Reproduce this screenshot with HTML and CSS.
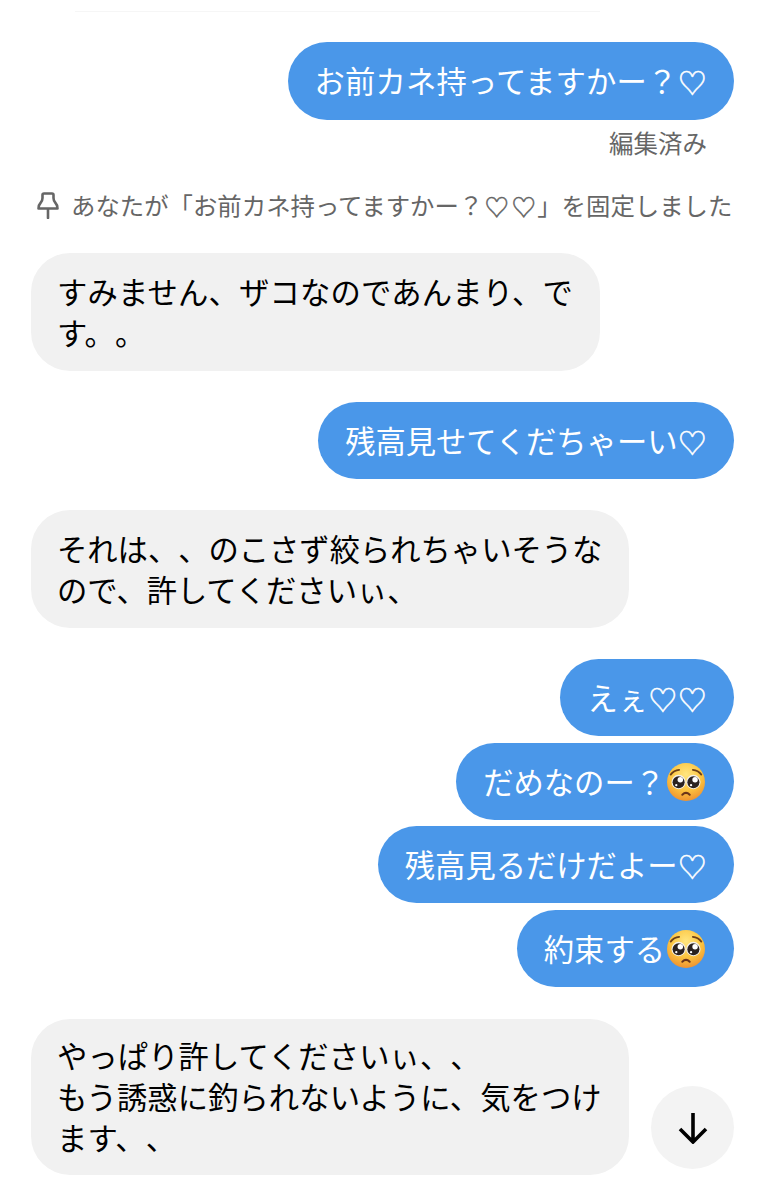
FILE: index.html
```html
<!DOCTYPE html>
<html lang="ja">
<head>
    <meta charset="UTF-8">
    <meta name="viewport" content="width=device-width, initial-scale=1.0">
    <title>Chat</title>
    <link rel="stylesheet" href="styles.css">
</head>
<body>
    <svg class="defs" width="0" height="0" aria-hidden="true">
        <defs>
            <radialGradient id="face" cx="50%" cy="30%" r="75%">
                <stop offset="0%" stop-color="#ffe680"/>
                <stop offset="55%" stop-color="#fcc43f"/>
                <stop offset="100%" stop-color="#ec8a2e"/>
            </radialGradient>
            <symbol id="plead" viewBox="0 0 36 36">
                <circle cx="18" cy="18" r="18" fill="url(#face)"/>
                <path d="M3.5 11 Q6.5 7 11.5 6.5 M32.5 11 Q29.5 7 24.5 6.5" fill="none" stroke="#6b3f18" stroke-width="1.7" stroke-linecap="round"/>
                <circle cx="11" cy="18" r="6.8" fill="#f4f0ea"/>
                <circle cx="25" cy="18" r="6.8" fill="#f4f0ea"/>
                <circle cx="11" cy="18.3" r="5.7" fill="#2b2220"/>
                <circle cx="25" cy="18.3" r="5.7" fill="#2b2220"/>
                <circle cx="12.6" cy="15.8" r="2.6" fill="#fff"/>
                <circle cx="26.6" cy="15.8" r="2.6" fill="#fff"/>
                <circle cx="8.8" cy="21" r="1.1" fill="#fff"/>
                <circle cx="22.8" cy="21" r="1.1" fill="#fff"/>
                <path d="M14.5 30 Q18 26.5 21.5 30" fill="none" stroke="#6b3418" stroke-width="1.9" stroke-linecap="round"/>
            </symbol>
        </defs>
    </svg>

    <main class="chat">
        <div class="divider"></div>

        <div class="bubble mine first">お前カネ持ってますかー？<span class="heart">♡</span></div>
        <div class="edited">編集済み</div>

        <div class="pin-note">
            <svg class="pin-icon" viewBox="0 0 22 27" width="22" height="27">
                <path d="M7 1.5 H15 Q16.5 1.5 16.5 3 V6 Q16.5 9 18.5 11 Q20.5 13 20.5 16.5 H1.5 Q1.5 13 3.5 11 Q5.5 9 5.5 6 V3 Q5.5 1.5 7 1.5 Z M11 16.5 V26" fill="none" stroke="#666" stroke-width="2.6" stroke-linejoin="round" stroke-linecap="round"/>
            </svg>
            <span>あなたが「お前カネ持ってますかー？<span class="heart">♡</span><span class="heart">♡</span>」を固定しました</span>
        </div>

        <div class="bubble theirs spaced">すみません、ザコなのであんまり、で<br>す。。</div>

        <div class="bubble mine gap-big">残高見せてくだちゃーい<span class="heart">♡</span></div>

        <div class="bubble theirs gap-big">それは、、のこさず絞られちゃいそうな<br>ので、許してくださいぃ、</div>

        <div class="bubble mine gap-big">えぇ<span class="heart">♡</span><span class="heart">♡</span></div>
        <div class="bubble mine gap-small">だめなのー？<svg class="emoji"><use href="#plead"/></svg></div>
        <div class="bubble mine gap-small">残高見るだけだよー<span class="heart">♡</span></div>
        <div class="bubble mine gap-small">約束する<svg class="emoji"><use href="#plead"/></svg></div>

        <div class="bubble theirs tall">やっぱり許してくださいぃ、、<br>もう誘惑に釣られないように、気をつけ<br>ます、、</div>

        <button class="scroll-btn" aria-label="scroll down">
            <svg viewBox="0 0 32 32" width="32" height="32">
                <path d="M16 1 V30 M3 17 L16 30 L29 17" fill="none" stroke="#000" stroke-width="3.6"/>
            </svg>
        </button>
    </main>
</body>
</html>
```

FILE: styles.css
```css
body {
    margin: 0;
    background: #fff;
    font-family: "Noto Sans CJK JP", "Noto Sans", sans-serif;
    color: #000;
    text-spacing-trim: space-all;
}
.defs {
    position: absolute;
}
.chat {
    position: relative;
    height: 1200px;
    box-sizing: border-box;
    padding: 11px 31px 0;
    display: flex;
    flex-direction: column;
    overflow: hidden;
}
.divider {
    height: 1px;
    margin: 0 134px 0 44px;
    background: #f6f6f6;
}
.bubble {
    box-sizing: border-box;
    width: fit-content;
    padding: 18px 27px;
    border-radius: 39px;
    font-size: 30.3px;
    line-height: 41px;
    white-space: nowrap;
}
.mine {
    align-self: flex-end;
    background: #4a97e9;
    color: #fff;
}
.theirs {
    align-self: flex-start;
    background: #f1f1f1;
    padding-left: 26px;
}
.spaced {
    letter-spacing: 0.2px;
}
.tall {
    margin-top: 32px;
    padding-top: 16px;
    padding-bottom: 17px;
    letter-spacing: 0.1px;
}
.first {
    margin-top: 30px;
    padding-bottom: 19px;
    letter-spacing: 0.2px;
}
.gap-big {
    margin-top: 31px;
}
.gap-small {
    margin-top: 6.7px;
}
.heart {
    display: inline-block;
    width: 29.5px;
    line-height: 1px;
    font-size: 28.5px;
    text-align: center;
    vertical-align: -1px;
    -webkit-text-stroke: 0.5px currentColor;
}
.emoji {
    display: inline-block;
    width: 38px;
    height: 38px;
    margin: -6px 2px -6px 2px;
    vertical-align: -1px;
}
.edited {
    align-self: flex-end;
    margin: 8px 27px 0 0;
    font-size: 24.5px;
    line-height: 30px;
    color: #666;
}
.pin-note {
    display: flex;
    align-items: center;
    gap: 12px;
    margin: 31px 0 32px 6px;
    font-size: 24.4px;
    line-height: 32px;
    color: #666;
    white-space: nowrap;
}
.pin-note .heart {
    width: 27px;
    font-size: 24.4px;
}
.pin-icon {
    flex: none;
}
.scroll-btn {
    position: absolute;
    left: 651px;
    top: 1086px;
    width: 83px;
    height: 83px;
    padding: 0;
    border: none;
    border-radius: 50%;
    background: #f3f3f3;
    display: flex;
    align-items: center;
    justify-content: center;
}
```
